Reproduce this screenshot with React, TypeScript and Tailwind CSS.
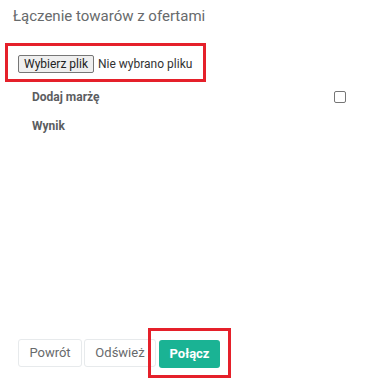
import * as React from "react"

export default function App() {
  const [margin, setMargin] = React.useState(false)

  return (
    <div className="h-[382px] w-[392px] bg-white flex flex-col font-['Roboto',sans-serif] overflow-hidden">
      <div className="pl-[13px] pt-[7px] text-[15px] leading-[19px] text-[#676a6c]">
        Łączenie towarów z ofertami
      </div>

      <div className="ml-[5px] mt-[17px] w-[201px] h-[39px] border-[3px] border-[#e5202a] flex items-start pl-[10px] pt-[9px]">
        <label className="flex items-center gap-[4px] cursor-pointer whitespace-nowrap shrink-0">
          <span className="h-[18px] px-[5px] flex items-center text-[12px] text-[#222] bg-[#efefef] border border-[#767676] rounded-[2px]">
            Wybierz plik
          </span>
          <span className="text-[12px] text-[#333]">Nie wybrano pliku</span>
        </label>
      </div>

      <div className="pl-[32px] pr-[46px] mt-[6px] flex items-center justify-between h-[18px]">
        <span className="text-[12px] font-bold text-[#5b5d5f]">Dodaj marżę</span>
        <button
          onClick={() => setMargin(!margin)}
          className="w-[12px] h-[12px] border border-[#767676] rounded-[2px] bg-white flex items-center justify-center text-[9px] leading-none"
        >
          {margin ? "✓" : ""}
        </button>
      </div>

      <div className="pl-[32px] mt-[11px] h-[18px] flex items-center">
        <span className="text-[12px] font-bold text-[#5b5d5f]">Wynik</span>
      </div>

      <div className="flex-1" />

      <div className="flex items-center pl-[18px] pb-[4px]">
        <button className="h-[28px] w-[64px] border border-[#e7eaec] rounded-[3px] bg-white text-[13px] text-[#676a6c]">
          Powrót
        </button>
        <button className="ml-[2px] h-[28px] w-[72px] border border-[#e7eaec] rounded-[3px] bg-white text-[13px] text-[#676a6c]">
          Odśwież
        </button>
        <div className="ml-[-8px] border-[3px] border-[#e5202a] px-[8px] pt-[9px] pb-[7px]">
          <button className="h-[28px] w-[61px] rounded-[3px] bg-[#1ab394] text-[13px] font-bold text-white">
            Połącz
          </button>
        </div>
      </div>
    </div>
  )
}
